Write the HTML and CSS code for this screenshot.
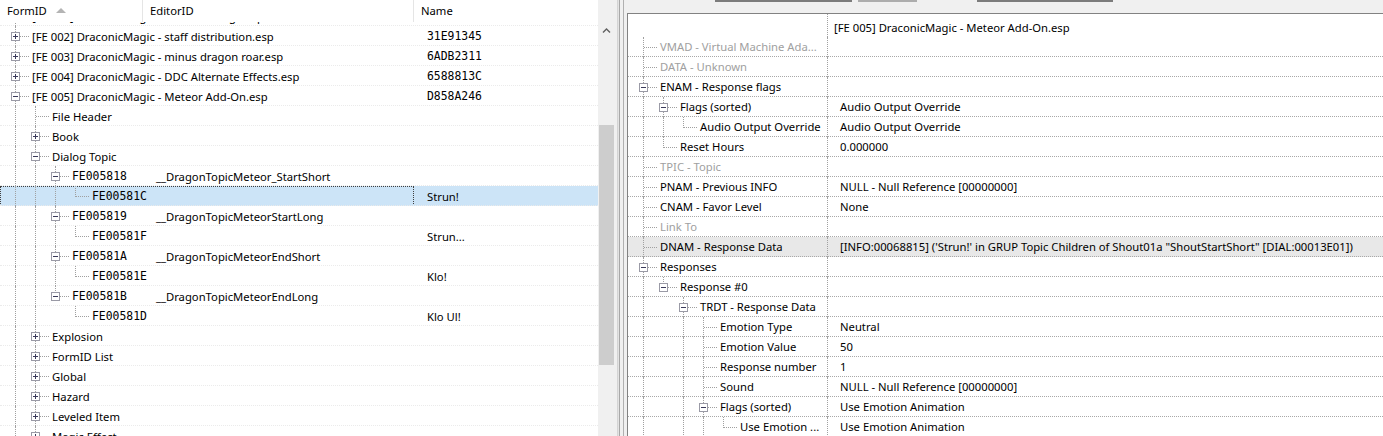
FILE: index.html
```html
<!DOCTYPE html>
<html>
<head>
<meta charset="utf-8">
<link rel="stylesheet" href="styles.css">
</head>
<body>
<div class="window">
  <div class="left">
    <div class="lhead">
      <div class="hc hc1">FormID<span class="sortarrow"></span></div>
      <div class="hc hc2">EditorID</div>
      <div class="hc hc3">Name</div>
      <div class="hcorner"></div>
    </div>
    <div class="lbody">
      <div class="ltree">
        <div class="lrows">
          <div class="row"><div class="main"><div class="c1"><i class="g v"><b class="bx p"></b></i><span class="lbl">[FE 001] DraconicMagic - Shout Package.esp</span></div><div class="c2"></div></div><div class="c3 mono"></div></div>
          <div class="row"><div class="main"><div class="c1"><i class="g t"><b class="bx p"></b></i><span class="lbl">[FE 002] DraconicMagic - staff distribution.esp</span></div><div class="c2"></div></div><div class="c3 mono">31E91345</div></div>
          <div class="row"><div class="main"><div class="c1"><i class="g t"><b class="bx p"></b></i><span class="lbl">[FE 003] DraconicMagic - minus dragon roar.esp</span></div><div class="c2"></div></div><div class="c3 mono">6ADB2311</div></div>
          <div class="row"><div class="main"><div class="c1"><i class="g t"><b class="bx p"></b></i><span class="lbl">[FE 004] DraconicMagic - DDC Alternate Effects.esp</span></div><div class="c2"></div></div><div class="c3 mono">6588813C</div></div>
          <div class="row"><div class="main"><div class="c1"><i class="g t"><b class="bx m"></b></i><span class="lbl">[FE 005] DraconicMagic - Meteor Add-On.esp</span></div><div class="c2"></div></div><div class="c3 mono">D858A246</div></div>
          <div class="row"><div class="main"><div class="c1"><i class="g v"></i><i class="g t"></i><span class="lbl">File Header</span></div><div class="c2"></div></div><div class="c3"></div></div>
          <div class="row"><div class="main"><div class="c1"><i class="g v"></i><i class="g t"><b class="bx p"></b></i><span class="lbl">Book</span></div><div class="c2"></div></div><div class="c3"></div></div>
          <div class="row"><div class="main"><div class="c1"><i class="g v"></i><i class="g t"><b class="bx m"></b></i><span class="lbl">Dialog Topic</span></div><div class="c2"></div></div><div class="c3"></div></div>
          <div class="row"><div class="main"><div class="c1"><i class="g v"></i><i class="g v"></i><i class="g t"><b class="bx m"></b></i><span class="lbl mono">FE005818</span></div><div class="c2">__DragonTopicMeteor_StartShort</div></div><div class="c3"></div></div>
          <div class="row sel"><div class="main"><div class="c1"><i class="g v"></i><i class="g v"></i><i class="g v"></i><i class="g l"></i><span class="lbl mono">FE00581C</span></div><div class="c2"></div></div><div class="c3">Strun!</div></div>
          <div class="row"><div class="main"><div class="c1"><i class="g v"></i><i class="g v"></i><i class="g t"><b class="bx m"></b></i><span class="lbl mono">FE005819</span></div><div class="c2">__DragonTopicMeteorStartLong</div></div><div class="c3"></div></div>
          <div class="row"><div class="main"><div class="c1"><i class="g v"></i><i class="g v"></i><i class="g v"></i><i class="g l"></i><span class="lbl mono">FE00581F</span></div><div class="c2"></div></div><div class="c3">Strun...</div></div>
          <div class="row"><div class="main"><div class="c1"><i class="g v"></i><i class="g v"></i><i class="g t"><b class="bx m"></b></i><span class="lbl mono">FE00581A</span></div><div class="c2">__DragonTopicMeteorEndShort</div></div><div class="c3"></div></div>
          <div class="row"><div class="main"><div class="c1"><i class="g v"></i><i class="g v"></i><i class="g v"></i><i class="g l"></i><span class="lbl mono">FE00581E</span></div><div class="c2"></div></div><div class="c3">Klo!</div></div>
          <div class="row"><div class="main"><div class="c1"><i class="g v"></i><i class="g v"></i><i class="g l"><b class="bx m"></b></i><span class="lbl mono">FE00581B</span></div><div class="c2">__DragonTopicMeteorEndLong</div></div><div class="c3"></div></div>
          <div class="row"><div class="main"><div class="c1"><i class="g v"></i><i class="g v"></i><i class="g e"></i><i class="g l"></i><span class="lbl mono">FE00581D</span></div><div class="c2"></div></div><div class="c3">Klo Ul!</div></div>
          <div class="row"><div class="main"><div class="c1"><i class="g v"></i><i class="g t"><b class="bx p"></b></i><span class="lbl">Explosion</span></div><div class="c2"></div></div><div class="c3"></div></div>
          <div class="row"><div class="main"><div class="c1"><i class="g v"></i><i class="g t"><b class="bx p"></b></i><span class="lbl">FormID List</span></div><div class="c2"></div></div><div class="c3"></div></div>
          <div class="row"><div class="main"><div class="c1"><i class="g v"></i><i class="g t"><b class="bx p"></b></i><span class="lbl">Global</span></div><div class="c2"></div></div><div class="c3"></div></div>
          <div class="row"><div class="main"><div class="c1"><i class="g v"></i><i class="g t"><b class="bx p"></b></i><span class="lbl">Hazard</span></div><div class="c2"></div></div><div class="c3"></div></div>
          <div class="row"><div class="main"><div class="c1"><i class="g v"></i><i class="g t"><b class="bx p"></b></i><span class="lbl">Leveled Item</span></div><div class="c2"></div></div><div class="c3"></div></div>
          <div class="row"><div class="main"><div class="c1"><i class="g v"></i><i class="g t"><b class="bx p"></b></i><span class="lbl">Magic Effect</span></div><div class="c2"></div></div><div class="c3"></div></div>
        </div>
      </div>
      <div class="vscroll">
        <div class="sup"><svg width="17" height="17" viewBox="0 0 17 17"><path d="M5 10.5 L8.5 7 L12 10.5" fill="none" stroke="#606060" stroke-width="1.4"/></svg></div>
        <div class="strack"><div class="sthumb"></div></div>
      </div>
    </div>
  </div>
  <div class="splitter"><div class="sp1"></div><div class="sp2"></div></div>
  <div class="right">
    <div class="rtool">
      <div class="tb tb1"></div><div class="tb tb2"></div><div class="tb tb3"></div>
    </div>
    <div class="rpane">
      <div class="rrow rhead"><div class="rc1"></div><div class="rc2 rhv">[FE 005] DraconicMagic - Meteor Add-On.esp</div></div>
      <div class="rrow"><div class="rc1"><i class="g t"></i><span class="lbl gr">VMAD - Virtual Machine Ada...</span></div><div class="rc2"></div></div>
      <div class="rrow"><div class="rc1"><i class="g t"></i><span class="lbl gr">DATA - Unknown</span></div><div class="rc2"></div></div>
      <div class="rrow"><div class="rc1"><i class="g t"><b class="bx m"></b></i><span class="lbl">ENAM - Response flags</span></div><div class="rc2"></div></div>
      <div class="rrow"><div class="rc1"><i class="g v"></i><i class="g t"><b class="bx m"></b></i><span class="lbl">Flags (sorted)</span></div><div class="rc2">Audio Output Override</div></div>
      <div class="rrow"><div class="rc1"><i class="g v"></i><i class="g v"></i><i class="g l"></i><span class="lbl">Audio Output Override</span></div><div class="rc2">Audio Output Override</div></div>
      <div class="rrow"><div class="rc1"><i class="g v"></i><i class="g l"></i><span class="lbl">Reset Hours</span></div><div class="rc2">0.000000</div></div>
      <div class="rrow"><div class="rc1"><i class="g t"></i><span class="lbl gr">TPIC - Topic</span></div><div class="rc2"></div></div>
      <div class="rrow"><div class="rc1"><i class="g t"></i><span class="lbl">PNAM - Previous INFO</span></div><div class="rc2">NULL - Null Reference [00000000]</div></div>
      <div class="rrow"><div class="rc1"><i class="g t"></i><span class="lbl">CNAM - Favor Level</span></div><div class="rc2">None</div></div>
      <div class="rrow"><div class="rc1"><i class="g t"></i><span class="lbl gr">Link To</span></div><div class="rc2"></div></div>
      <div class="rrow hl"><div class="rc1"><i class="g t"></i><span class="lbl">DNAM - Response Data</span></div><div class="rc2">[INFO:00068815] ('Strun!' in GRUP Topic Children of Shout01a "ShoutStartShort" [DIAL:00013E01])</div></div>
      <div class="rrow"><div class="rc1"><i class="g t"><b class="bx m"></b></i><span class="lbl">Responses</span></div><div class="rc2"></div></div>
      <div class="rrow"><div class="rc1"><i class="g v"></i><i class="g l"><b class="bx m"></b></i><span class="lbl">Response #0</span></div><div class="rc2"></div></div>
      <div class="rrow"><div class="rc1"><i class="g v"></i><i class="g e"></i><i class="g t"><b class="bx m"></b></i><span class="lbl">TRDT - Response Data</span></div><div class="rc2"></div></div>
      <div class="rrow"><div class="rc1"><i class="g v"></i><i class="g e"></i><i class="g v"></i><i class="g t"></i><span class="lbl">Emotion Type</span></div><div class="rc2">Neutral</div></div>
      <div class="rrow"><div class="rc1"><i class="g v"></i><i class="g e"></i><i class="g v"></i><i class="g t"></i><span class="lbl">Emotion Value</span></div><div class="rc2">50</div></div>
      <div class="rrow"><div class="rc1"><i class="g v"></i><i class="g e"></i><i class="g v"></i><i class="g t"></i><span class="lbl">Response number</span></div><div class="rc2">1</div></div>
      <div class="rrow"><div class="rc1"><i class="g v"></i><i class="g e"></i><i class="g v"></i><i class="g t"></i><span class="lbl">Sound</span></div><div class="rc2">NULL - Null Reference [00000000]</div></div>
      <div class="rrow"><div class="rc1"><i class="g v"></i><i class="g e"></i><i class="g v"></i><i class="g t"><b class="bx m"></b></i><span class="lbl">Flags (sorted)</span></div><div class="rc2">Use Emotion Animation</div></div>
      <div class="rrow"><div class="rc1"><i class="g v"></i><i class="g e"></i><i class="g v"></i><i class="g v"></i><i class="g l"></i><span class="lbl">Use Emotion ...</span></div><div class="rc2">Use Emotion Animation</div></div>
    </div>
  </div>
</div>
</body>
</html>
```

FILE: styles.css
```css
* { box-sizing: border-box; }
html, body { margin: 0; padding: 0; }
body {
  width: 1383px;
  height: 436px;
  overflow: hidden;
  background: #f0f0f0;
  font-family: "Noto Sans", "Open Sans", sans-serif;
  font-size: 11.25px;
  color: #000;
}
.window { display: flex; height: 436px; }

/* ---------- left tree ---------- */
.left { width: 615px; flex: none; display: flex; flex-direction: column; background: #fff; }
.lhead { height: 22px; display: flex; flex: none; background: #fff; position: relative; z-index: 2; }
.hc { height: 22px; line-height: 22px; padding-left: 7px; white-space: nowrap; border-right: 1px solid #e5e5e5; }
.hc1 { width: 143px; display: flex; align-items: center; }
.hc2 { width: 271px; }
.hc3 { width: 184px; border-right: none; }
.hcorner { width: 17px; background: #f0f0f0; }
.sortarrow {
  width: 0; height: 0; margin-left: 9px; margin-top: -1px;
  border-left: 5px solid transparent; border-right: 5px solid transparent;
  border-bottom: 5px solid #b4b4b4;
}
.lbody { flex: 1; display: flex; min-height: 0; }
.ltree { width: 598px; flex: none; overflow: hidden; }
.lrows { margin-top: -16px; }
.row { position: relative; height: 20px; display: flex; line-height: 21px; white-space: nowrap; }
.row::after { content: ""; position: absolute; left: 0; right: 0; bottom: 0; border-bottom: 1px dotted #ebebeb; }
.main { width: 414px; flex: none; display: flex; position: relative; }
.c1 { width: 143px; flex: none; display: flex; padding-left: 5px; position: relative; z-index: 1; }
.c2 { flex: 1; padding-left: 13px; }
.c3 { flex: 1; padding-left: 13px; }
.row.sel { background: #cce4f7; }
.row.sel .main::after { content: ""; position: absolute; inset: 0; border: 1px dotted #404040; }
.lbl { margin-left: 7px; }
.mono { font-family: "DejaVu Sans Mono", "Liberation Mono", monospace; font-size: 11.4px; }

/* tree lines */
.g { position: relative; flex: none; width: 20px; height: 20px; display: block; }
.v::before, .t::before { content: ""; position: absolute; left: 10px; top: 0; bottom: 0; border-left: 1px dotted #a0a0a0; }
.l::before { content: ""; position: absolute; left: 10px; top: 0; height: 11px; border-left: 1px dotted #a0a0a0; }
.t::after, .l::after { content: ""; position: absolute; left: 11px; right: -4px; top: 10px; border-top: 1px dotted #a0a0a0; }
.bx { position: absolute; z-index: 1; left: 6px; top: 6px; width: 9px; height: 9px; border: 1px solid #9a9aa6; background: #fff; }
.bx::before { content: ""; position: absolute; left: 1px; top: 3px; width: 5px; height: 1px; background: #3a3a5a; }
.bx.p::after { content: ""; position: absolute; left: 3px; top: 1px; width: 1px; height: 5px; background: #3a3a5a; }

/* scrollbar */
.vscroll { width: 17px; flex: none; background: #f0f0f0; display: flex; flex-direction: column; }
.sup { height: 17px; flex: none; }
.sup svg { display: block; }
.strack { flex: 1; padding: 86px 1px 0 1px; }
.sthumb { height: 240px; background: #cdcdcd; }

/* splitter */
.splitter { width: 12px; flex: none; display: flex; background: #f0f0f0; padding-left: 2px; }
.sp1 { width: 3px; background: #e3e3e3; border-left: 1px solid #d4d4d4; border-right: 1px solid #a8a8a8; }
.sp2 { width: 4px; border-right: 1px solid #b0b0b0; }

/* ---------- right pane ---------- */
.right { flex: 1; display: flex; flex-direction: column; min-width: 0; }
.rtool { height: 13px; flex: none; display: flex; align-items: flex-start; background: #f0f0f0; }
.tb { height: 2px; }
.tb1 { margin-left: 88px; width: 137px; background: #7c7c7c; }
.tb2 { margin-left: 6px; width: 59px; background: #adadad; }
.tb3 { margin-left: 60px; width: 136px; background: #7c7c7c; }
.rpane { flex: 1; background: #fff; border-top: 1px solid #828282; border-left: 1px solid #828282; overflow: hidden; }
.rrow { position: relative; height: 20px; display: flex; line-height: 20px; white-space: nowrap; }
.rrow::after { content: ""; position: absolute; left: 0; right: 0; bottom: 0; border-bottom: 1px dotted #a8a8a8; }
.rrow.rhead { height: 23px; }
.rrow.rhead::after { display: none; }
.rrow.hl { background: #e8e8e8; }
.rc1 { width: 200px; flex: none; display: flex; padding-left: 5px; border-right: 1px dotted #a0a0a0; overflow: hidden; }
.rc2 { flex: 1; padding-left: 12px; }
.rhv { padding-left: 6px; padding-top: 4px; }
.gr { color: #a0a0a0; }
```
